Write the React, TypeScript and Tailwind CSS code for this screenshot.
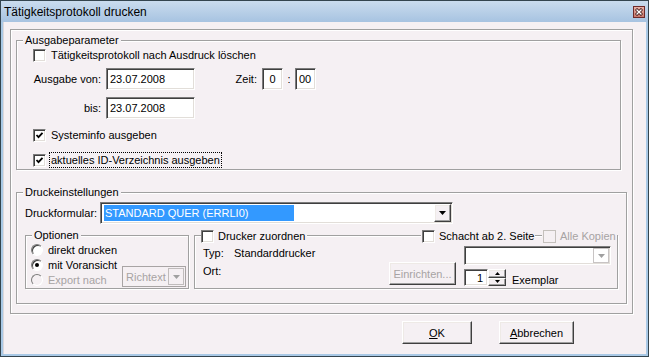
import React from "react";

const sunken =
  "border border-t-[#7c7c7c] border-l-[#7c7c7c] border-b-white border-r-white shadow-[inset_1px_1px_0_#3f3f3f,inset_-1px_-1px_0_#e2ded9]";
const raised =
  "border border-t-white border-l-white border-b-[#3f3f3f] border-r-[#3f3f3f] shadow-[inset_-1px_-1px_0_#a0a0a0,inset_1px_1px_0_#eeeae6]";
const etched = "border border-[#a0a0a0] shadow-[inset_1px_1px_0_#ffffff,1px_1px_0_#ffffff]";

const Check = ({ checked = false, disabled = false }: { checked?: boolean; disabled?: boolean }) => (
  <span
    className={`w-[13px] h-[13px] shrink-0 flex items-center justify-center ${
      disabled ? "border border-[#c4c0bc] bg-[#f5f0f3]" : `${sunken} bg-white`
    }`}
  >
    {checked && (
      <svg width="9" height="9" viewBox="0 0 9 9">
        <path d="M1.5 4 L3.5 6.2 L7.5 1.8" stroke="#000" strokeWidth="1.8" fill="none" />
      </svg>
    )}
  </span>
);

const Radio = ({ checked = false, disabled = false }: { checked?: boolean; disabled?: boolean }) => (
  <span
    className={`w-[12px] h-[12px] shrink-0 rounded-full flex items-center justify-center border border-t-[#7c7c7c] border-l-[#7c7c7c] border-b-white border-r-white ${
      disabled ? "bg-[#f5f0f3]" : "bg-white shadow-[inset_1px_1px_0_#3f3f3f]"
    }`}
  >
    {checked && <span className="w-[4px] h-[4px] rounded-full bg-black" />}
  </span>
);

const Arrow = ({ gray = false, up = false, small = false }: { gray?: boolean; up?: boolean; small?: boolean }) => (
  <svg width={small ? 5 : 7} height={small ? 3 : 4} viewBox="0 0 7 4">
    <path d={up ? "M0 4 H7 L3.5 0 Z" : "M0 0 H7 L3.5 4 Z"} fill={gray ? "#a0a0a0" : "#000"} />
  </svg>
);

const Group = ({
  title,
  className,
  children,
}: {
  title: string;
  className: string;
  children: React.ReactNode;
}) => (
  <div className={`relative ${etched} ${className}`}>
    <span className="absolute left-[6px] top-[-8px] px-[2px] bg-[#f5f0f3] leading-[14px]">{title}</span>
    {children}
  </div>
);

const Field = ({ value, className }: { value: string; className: string }) => (
  <div className={`${sunken} bg-white h-[22px] flex items-center ${className}`}>{value}</div>
);

const Button = ({ children, className }: { children: React.ReactNode; className: string }) => (
  <div className={`${raised} bg-[#f5f0f3] flex items-center justify-center ${className}`}>{children}</div>
);

const App = () => {
  return (
    <div className="w-[649px] h-[357px] bg-[#34454f] p-[1px] font-['Liberation_Sans',Arial,sans-serif] text-[11px] text-black leading-[14px]">
      <div className="w-full h-full bg-[#a9c9e6] flex flex-col">
        <div className="h-[21px] shrink-0 flex items-center justify-between pl-[3px] pr-[3px] bg-gradient-to-b from-[#cadcee] to-[#a7c3e1]">
          <span className="text-[12px]">Tätigkeitsprotokoll drucken</span>
          <span className="w-[12px] h-[12px] mt-[1px] border border-[#6e2a2a] bg-gradient-to-b from-[#e8b2a8] to-[#c9786c] flex items-center justify-center">
            <svg width="8" height="8" viewBox="0 0 8 8">
              <path d="M1 1 L7 7 M7 1 L1 7" stroke="#3a1010" strokeWidth="3" />
              <path d="M1.5 1.5 L6.5 6.5 M6.5 1.5 L1.5 6.5" stroke="#fff" strokeWidth="1.4" />
            </svg>
          </span>
        </div>

        <div className="flex-1 mx-[2px] mb-[2px] bg-[#f5f0f3] flex flex-col border-l border-[#dcd8dc]">
          {/* outer panel */}
          <div className={`${etched} ml-[6px] mt-[7px] w-[623px] h-[285px] flex flex-col`}>
            <Group title="Ausgabeparameter" className="ml-[5px] mt-[10px] w-[605px] h-[130px] flex flex-col">
              <div className="flex items-center mt-[7px] ml-[16px]">
                <Check />
                <span className="ml-[5px]">Tätigkeitsprotokoll nach Ausdruck löschen</span>
              </div>
              <div className="flex items-center mt-[6px] h-[22px]">
                <span className="w-[84px] text-right">Ausgabe von:</span>
                <Field value="23.07.2008" className="ml-[5px] w-[89px] pl-[3px]" />
                <span className="w-[62px] text-right">Zeit:</span>
                <Field value="0" className="ml-[5px] w-[21px] justify-center" />
                <span className="w-[12px] text-center">:</span>
                <Field value="00" className="w-[21px] pl-[3px]" />
              </div>
              <div className="flex items-center mt-[7px] h-[22px]">
                <span className="w-[84px] text-right">bis:</span>
                <Field value="23.07.2008" className="ml-[5px] w-[89px] pl-[3px]" />
              </div>
              <div className="flex items-center mt-[9px] ml-[16px]">
                <Check checked />
                <span className="ml-[5px]">Systeminfo ausgeben</span>
              </div>
              <div className="flex items-center mt-[10px] ml-[16px]">
                <Check checked />
                <span className="ml-[3px] px-[1px] border border-dotted border-black">
                  aktuelles ID-Verzeichnis ausgeben
                </span>
              </div>
            </Group>

            <Group title="Druckeinstellungen" className="ml-[5px] mt-[22px] w-[611px] h-[112px] flex flex-col">
              <div className="flex items-center mt-[9px] ml-[8px]">
                <span className="w-[75px]">Druckformular:</span>
                <div className={`${sunken} bg-white w-[353px] h-[22px] flex items-center pl-[3px] pr-[1px]`}>
                  <span className="bg-[#3399ff] text-white w-[190px] h-[16px] flex items-center pl-[1px]">
                    STANDARD QUER (ERRLI0)
                  </span>
                  <span className="flex-1" />
                  <Button className="w-[17px] h-[18px]">
                    <Arrow />
                  </Button>
                </div>
              </div>

              <div className="flex mt-[11px] ml-[8px]">
                <Group title="Optionen" className="w-[164px] h-[54px] flex items-end justify-between">
                  <div className="flex flex-col mb-[1px] ml-[5px]">
                    <div className="flex items-center h-[15px]">
                      <Radio />
                      <span className="ml-[5px]">direkt drucken</span>
                    </div>
                    <div className="flex items-center h-[15px]">
                      <Radio checked />
                      <span className="ml-[5px]">mit Voransicht</span>
                    </div>
                    <div className="flex items-center h-[15px] text-[#a7a3a3]">
                      <Radio disabled />
                      <span className="ml-[5px]">Export nach</span>
                    </div>
                  </div>
                  <div className="w-[64px] h-[21px] mb-[1px] mr-[2px] border border-[#a8a4a4] flex items-center pl-[3px] pr-[1px] text-[#a7a3a3]">
                    <span className="flex-1">Richtext</span>
                    <span className="w-[16px] h-[17px] border border-[#c0bcbc] flex items-center justify-center">
                      <Arrow gray />
                    </span>
                  </div>
                </Group>

                <div className={`relative ${etched} ml-[5px] w-[424px] h-[54px] flex`}>
                  <div className="absolute left-[6px] top-[-7px] flex items-center bg-[#f5f0f3] pr-[2px]">
                    <Check />
                    <span className="ml-[4px]">Drucker zuordnen</span>
                  </div>
                  <div className="absolute left-[226px] top-[-7px] flex items-center bg-[#f5f0f3] px-[1px]">
                    <Check />
                    <span className="ml-[4px]">Schacht ab 2. Seite</span>
                  </div>
                  <div className="absolute left-[347px] top-[-7px] flex items-center bg-[#f5f0f3] px-[1px] text-[#a7a3a3]">
                    <Check disabled />
                    <span className="ml-[4px]">Alle Kopien</span>
                  </div>

                  <div className="w-[269px] flex flex-col pl-[8px] pr-[8px]">
                    <div className="flex mt-[10px] h-[14px]">
                      <span className="w-[31px]">Typ:</span>
                      <span>Standarddrucker</span>
                    </div>
                    <div className="flex justify-between mt-[2px]">
                      <span className="mt-[2px]">Ort:</span>
                      <Button className="w-[67px] h-[23px] text-[#a7a3a3]">Einrichten...</Button>
                    </div>
                  </div>
                  <div className="w-[147px] flex flex-col">
                    <div className={`${sunken} bg-white h-[19px] mt-[10px] flex items-center justify-end pr-[1px]`}>
                      <span className="w-[16px] h-[15px] border border-[#c8c4c4] flex items-center justify-center">
                        <Arrow gray />
                      </span>
                    </div>
                    <div className="flex items-center mt-[3px]">
                      <div className={`${sunken} bg-white w-[24px] h-[17px] flex items-center justify-end pr-[4px]`}>1</div>
                      <div className="flex flex-col w-[18px] h-[17px]">
                        <Button className="h-[8.5px]">
                          <Arrow up small />
                        </Button>
                        <Button className="h-[8.5px]">
                          <Arrow small />
                        </Button>
                      </div>
                      <span className="ml-[6px] mt-[5px]">Exemplar</span>
                    </div>
                  </div>
                </div>
              </div>
            </Group>
          </div>

          <div className="flex mt-[7px] ml-[398px]">
            <Button className="w-[70px] h-[23px]">
              <span>
                <span className="underline">O</span>K
              </span>
            </Button>
            <Button className="w-[75px] h-[23px] ml-[27px]">
              <span>
                <span className="underline">A</span>bbrechen
              </span>
            </Button>
          </div>
        </div>
      </div>
    </div>
  );
};

export default App;
